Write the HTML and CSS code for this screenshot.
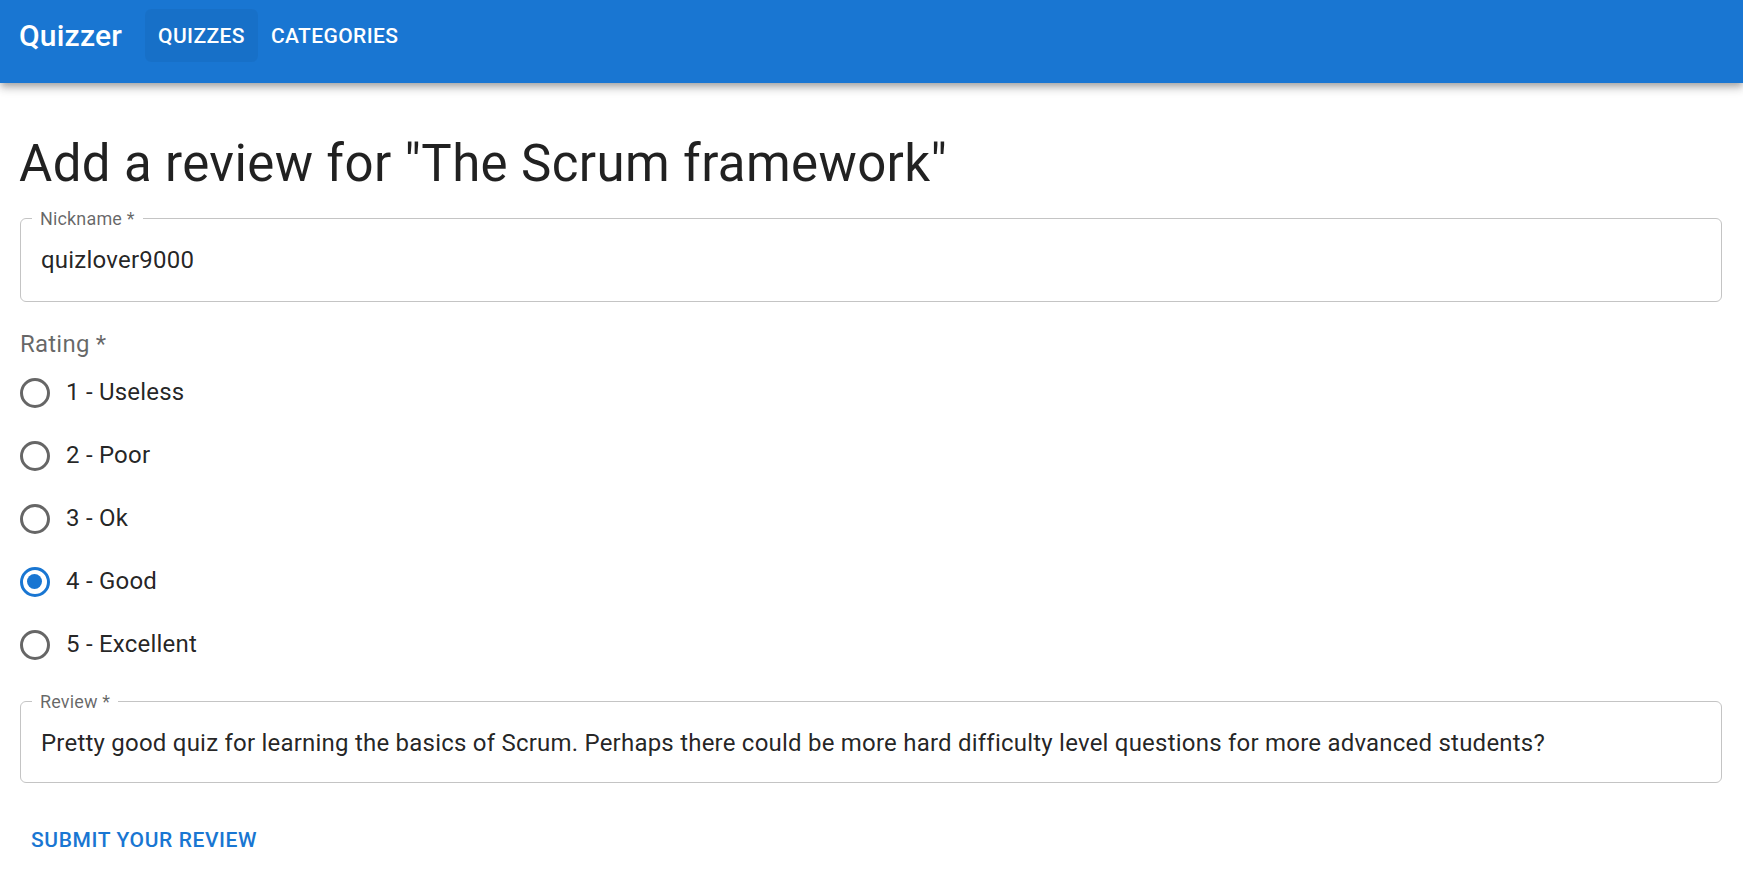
FILE: index.html
```html
<!DOCTYPE html>
<html lang="en">
<head>
<meta charset="utf-8">
<title>Quizzer</title>
<link rel="stylesheet" href="styles.css">
</head>
<body>
<header class="appbar">
  <div class="toolbar">
    <div class="brand">Quizzer</div>
    <nav class="nav">
      <a class="nav-btn active">Quizzes</a>
      <a class="nav-btn">Categories</a>
    </nav>
  </div>
</header>
<main class="page">
  <h1 class="title">Add a review for "The Scrum framework"</h1>
  <fieldset class="field">
    <legend class="field-label">Nickname *</legend>
    <div class="field-value">quizlover9000</div>
  </fieldset>
  <div class="rating-label">Rating *</div>
  <div class="radio-group">
    <div class="radio-row"><span class="radio"></span><span class="radio-text">1 - Useless</span></div>
    <div class="radio-row"><span class="radio"></span><span class="radio-text">2 - Poor</span></div>
    <div class="radio-row"><span class="radio"></span><span class="radio-text">3 - Ok</span></div>
    <div class="radio-row"><span class="radio checked"></span><span class="radio-text">4 - Good</span></div>
    <div class="radio-row"><span class="radio"></span><span class="radio-text">5 - Excellent</span></div>
  </div>
  <fieldset class="field review">
    <legend class="field-label">Review *</legend>
    <div class="field-value">Pretty good quiz for learning the basics of Scrum. Perhaps there could be more hard difficulty level questions for more advanced students?</div>
  </fieldset>
  <button class="submit">Submit your review</button>
</main>
</body>
</html>
```
FILE: styles.css
```css
* { box-sizing: border-box; }
html, body { margin: 0; padding: 0; background: #fff; }
body {
  font-family: Roboto, "Liberation Sans", Arial, sans-serif;
  color: rgba(0,0,0,0.87);
}
.appbar {
  background: #1976d2;
  color: #fff;
  height: 83px;
  box-shadow: 0 3px 6px -1.5px rgba(0,0,0,.2), 0 6px 7.5px 0 rgba(0,0,0,.14), 0 1.5px 15px 0 rgba(0,0,0,.12);
  position: relative;
  z-index: 1;
}
.toolbar {
  height: 71px;
  display: flex;
  align-items: center;
  padding-left: 19px;
}
.brand {
  font-size: 30px;
  font-weight: 500;
  letter-spacing: 0.2px;
  line-height: 1.6;
  margin-right: 23px;
}
.nav { display: flex; }
.nav-btn {
  display: flex;
  align-items: center;
  height: 53px;
  padding: 0 13px;
  font-size: 21px;
  font-weight: 500;
  letter-spacing: 0.4px;
  text-transform: uppercase;
  border-radius: 6px;
  cursor: pointer;
}
.nav-btn.active { background: rgba(0,0,0,0.045); }
.page {
  padding: 0 21px 0 20px;
}
.title {
  margin: 49px 0 0 -1px;
  font-size: 51px;
  font-weight: 400;
  line-height: 63px;
  letter-spacing: 0.375px;
  color: rgba(0,0,0,0.87);
}
.field {
  margin: 13px 0 0;
  padding: 0;
  border: 1px solid #c4c4c4;
  border-radius: 6px;
  min-width: 0;
}
.field-label {
  margin-left: 11px;
  padding: 2px 8px 0;
  font-size: 18px;
  line-height: 18px;
  color: rgba(0,0,0,0.6);
  letter-spacing: 0.15px;
}
.field-value {
  padding: 15px 20px 23px;
  font-size: 24px;
  line-height: 34.5px;
  letter-spacing: 0.22px;
  color: rgba(0,0,0,0.87);
}
.review { margin-top: 15px; }
.review .field-value { padding-bottom: 21px; }
.rating-label {
  margin-top: 25px;
  font-size: 24px;
  line-height: 34.5px;
  letter-spacing: 0.22px;
  color: rgba(0,0,0,0.6);
}
.radio-group { display: flex; flex-direction: column; }
.radio-row {
  height: 63px;
  display: flex;
  align-items: center;
}
.radio {
  width: 30px;
  height: 30px;
  border: 3px solid rgba(0,0,0,0.6);
  border-radius: 50%;
  margin-left: -0.5px;
  margin-right: 16.5px;
  display: flex;
  align-items: center;
  justify-content: center;
  flex: none;
}
.radio.checked { border-color: #1976d2; }
.radio.checked::after {
  content: "";
  width: 15px;
  height: 15px;
  border-radius: 50%;
  background: #1976d2;
}
.radio-text {
  font-size: 24px;
  line-height: 34.5px;
  letter-spacing: 0.22px;
}
.submit {
  display: block;
  margin: 30px 0 0 -1px;
  padding: 9px 12px;
  background: none;
  border: 0;
  border-radius: 6px;
  font-family: Roboto, "Liberation Sans", Arial, sans-serif;
  font-size: 21px;
  font-weight: 500;
  line-height: 36.75px;
  letter-spacing: 0.6px;
  text-transform: uppercase;
  color: #1976d2;
  cursor: pointer;
}
```
